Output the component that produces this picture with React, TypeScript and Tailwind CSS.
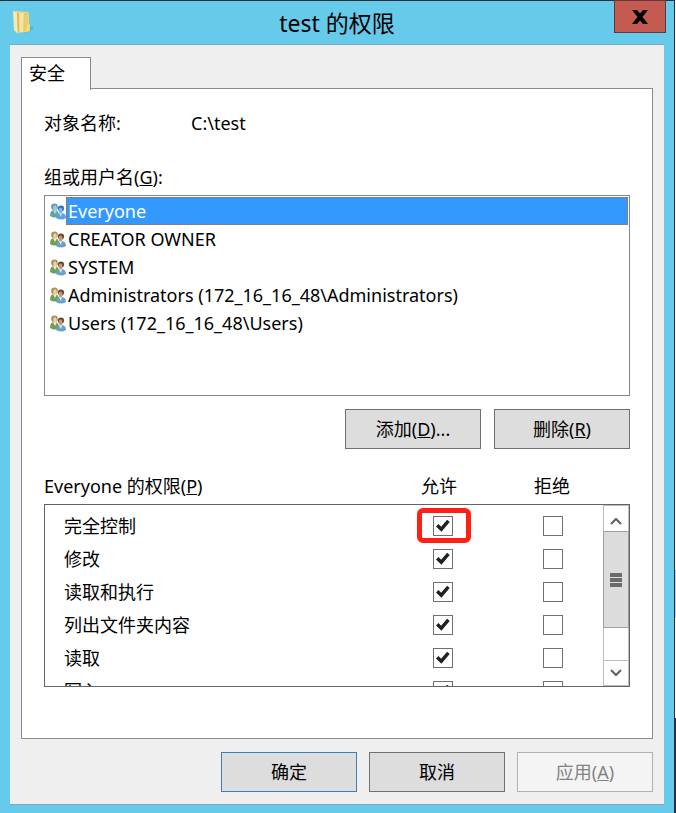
import { useState } from "react";

const groups = [
  "Everyone",
  "CREATOR OWNER",
  "SYSTEM",
  "Administrators (172_16_16_48\\Administrators)",
  "Users (172_16_16_48\\Users)",
];

const permissions = ["完全控制", "修改", "读取和执行", "列出文件夹内容", "读取", "写入"];

function FolderIcon() {
  return (
    <svg width="22" height="25" viewBox="0 0 22 25" aria-hidden="true">
      <path d="M12 23 L18 21 L21 17 L17 16 Z" fill="#3f87a3" opacity=".35" />
      <path d="M3 1 L15 2 L16 4 V14 L17 15 V21 L6 23 Z" fill="#ecd57f" />
      <path d="M6 3 L14 3 V21 L7 22 Z" fill="#f3e4a0" />
      <path d="M11 3 L15 3 V21 L10 21 Z" fill="#e6cb72" />
      <path d="M0 1 L4 2 L5 24 L1 20 Z" fill="#f7e9ad" />
      <path d="M4 2 L6 4 V22 L5 24 Z" fill="#d9b95a" />
      <path d="M13 18 L15 14 L17 15 V21 L13 22 Z" fill="#f4dc6e" />
    </svg>
  );
}

function GroupIcon({ selected }: { selected: boolean }) {
  return (
    <svg width="16" height="17" viewBox="0 0 16 17" aria-hidden="true">
      <path d="M0 13 Q0 7 4 7 Q9 7 9 13 Q5 16 0 13 Z" fill={selected ? "#5fa89c" : "#6ea050"} />
      <path d="M3 7 L5 11 L7 7 Z" fill={selected ? "#b4dcf0" : "#f0eee0"} />
      <circle cx="4.5" cy="3.8" r="3.4" fill={selected ? "#5b9dc4" : "#b08f55"} />
      <ellipse cx="5" cy="5" rx="1.8" ry="2.7" fill={selected ? "#9ccbe8" : "#f0d0a8"} />
      <path d="M6 15 Q6 10 11 10 Q16 10 16 15 Q11 18 6 15 Z" fill={selected ? "#5ba0e4" : "#6ba0c8"} />
      <path d="M9 10 L11 14 L12 10 Z" fill={selected ? "#c4e0fa" : "#eef2f5"} />
      <circle cx="11" cy="5.6" r="3.1" fill={selected ? "#2f6fa6" : "#5f4a3a"} />
      <ellipse cx="10.6" cy="7.4" rx="1.9" ry="2.8" fill={selected ? "#7db6e6" : "#c99672"} />
    </svg>
  );
}

function CheckBox({ label, defaultChecked }: { label: string; defaultChecked?: boolean }) {
  return (
    <span className="relative block size-5">
      <input
        type="checkbox"
        aria-label={label}
        defaultChecked={defaultChecked}
        className="peer block size-5 appearance-none border border-[#707070] bg-white"
      />
      <svg
        className="pointer-events-none absolute inset-0 hidden peer-checked:block"
        width="20"
        height="20"
        viewBox="0 0 20 20"
        aria-hidden="true"
      >
        <path d="M4.2 9.2 L8.3 13.2 L15.4 4.8" fill="none" stroke="#212121" strokeWidth="3.4" />
      </svg>
    </span>
  );
}

const buttonClass = "h-10 w-[136px] border border-[#707070] bg-[#dddddd] text-center";

export default function App() {
  const [selected, setSelected] = useState(0);

  return (
    <div className="flex bg-white font-['Noto_Sans','Noto_Sans_CJK_SC',sans-serif] text-[18px] leading-7 text-black">
      <div className="min-w-0 flex-1 border-t border-r border-[#2d2d33] bg-[#66cbea] px-[10px] pb-2">
        <header className="relative flex h-[43px] items-center justify-center">
          <span className="absolute top-[9px] left-[3px]">
            <FolderIcon />
          </span>
          <h1 className="text-[23px]">test 的权限</h1>
          <button
            type="button"
            aria-label="关闭"
            className="absolute -top-px -right-0.5 flex h-[33px] w-[52px] items-center justify-center border border-[#5c3a40] bg-[#c45a50]"
          >
            <svg width="16" height="14" viewBox="0 0 16 14" aria-hidden="true">
              <path d="M0 0 H5 L8 3.5 L11 0 H16 L10.5 7 L16 14 H11 L8 10.5 L5 14 H0 L5.5 7 Z" fill="#000" />
            </svg>
          </button>
        </header>

        <main className="border-y border-[#7fa9bb] bg-[#efefef] px-[11px] py-3">
          <div role="tablist" className="relative -mb-0.5">
            <button
              type="button"
              role="tab"
              aria-selected="true"
              className="block h-[33px] w-[70px] border border-b-0 border-[#898c95] bg-white pb-0.5 pl-[7px] text-left"
            >
              安全
            </button>
          </div>

          <section className="border border-[#898c95] bg-white px-[22px] pt-5 pb-[51px]">
            <div className="flex">
              <span className="w-[147px]">对象名称:</span>
              <span>C:\test</span>
            </div>

            <h2 className="mt-[26px]">
              组或用户名(<u>G</u>):
            </h2>
            <ul className="mt-1 h-[201px] border border-[#828790] p-px">
              {groups.map((name, i) => (
                <li key={name}>
                  <button
                    type="button"
                    onClick={() => setSelected(i)}
                    className="flex w-full items-center pl-[4px] text-left"
                  >
                    <GroupIcon selected={i === selected} />
                    <span
                      className={
                        i === selected
                          ? "h-7 flex-1 border border-dotted border-[#cc6600] bg-[#3399ff] pl-px leading-[26px] text-white"
                          : "h-7 flex-1 pl-0.5"
                      }
                    >
                      {name}
                    </span>
                  </button>
                </li>
              ))}
            </ul>

            <div className="mt-[13px] flex justify-end gap-[13px]">
              <button type="button" className={buttonClass}>
                添加(<u>D</u>)...
              </button>
              <button type="button" className={buttonClass}>
                删除(<u>R</u>)
              </button>
            </div>

            <div className="mt-[23px] flex">
              <span className="flex-1">
                Everyone 的权限(<u>P</u>)
              </span>
              <span className="w-[113px]">允许</span>
              <span className="w-24">拒绝</span>
            </div>
            <div className="mt-1 flex h-[183px] overflow-hidden border border-[#646464]">
              <table className="mt-[11px] block flex-1">
                <tbody className="flex flex-col gap-[13px]">
                  {permissions.map((name, i) => (
                    <tr key={name} className="flex h-5 items-center">
                      <th scope="row" className="flex-1 pl-[19px] text-left font-normal">
                        {name}
                      </th>
                      <td className="relative w-[110px]">
                        <CheckBox label={`${name} 允许`} defaultChecked />
                        {i === 0 && (
                          <span className="pointer-events-none absolute -top-2 -left-4 h-[35px] w-[54px] rounded-md border-5 border-[#ff2014]" />
                        )}
                      </td>
                      <td className="w-[60px]">
                        <CheckBox label={`${name} 拒绝`} />
                      </td>
                    </tr>
                  ))}
                </tbody>
              </table>
              <div className="flex w-[26px] flex-col border border-[#bdbdbd]">
                <button type="button" aria-label="向上滚动" className="flex h-[25px] items-center justify-center pt-1">
                  <svg width="12" height="8" viewBox="0 0 12 8" aria-hidden="true">
                    <path d="M1 7 L6 2 L11 7" fill="none" stroke="#606060" strokeWidth="2" />
                  </svg>
                </button>
                <div className="-mx-px flex h-[97px] flex-col items-center justify-center gap-px border border-[#a0a0a0] bg-[#dcdcdc]">
                  <i className="h-1 w-3 bg-[#6b6b6b]" />
                  <i className="h-1 w-3 bg-[#6b6b6b]" />
                  <i className="h-1 w-3 bg-[#6b6b6b]" />
                </div>
                <button
                  type="button"
                  aria-label="向下滚动"
                  className="mt-auto flex h-[25px] items-center justify-center border-t border-[#bdbdbd]"
                >
                  <svg width="12" height="8" viewBox="0 0 12 8" aria-hidden="true">
                    <path d="M1 1 L6 6 L11 1" fill="none" stroke="#606060" strokeWidth="2" />
                  </svg>
                </button>
              </div>
            </div>
          </section>

          <footer className="mt-[13px] flex justify-end gap-3">
            <button type="button" className="h-10 w-[136px] border border-[#3c7fb1] bg-[#dddddd] text-center">
              确定
            </button>
            <button type="button" className={buttonClass}>
              取消
            </button>
            <button
              type="button"
              disabled
              className="h-10 w-[136px] border border-[#adb2b5] bg-[#f4f4f4] text-center text-[#838383]"
            >
              应用(<u>A</u>)
            </button>
          </footer>
        </main>
      </div>
      <div className="flex w-px flex-col justify-end">
        <div className="h-12 bg-[#b9cfe6]" />
        <div className="h-[100px]" />
        <div className="h-[95px] bg-[#2d2d33]" />
      </div>
    </div>
  );
}
